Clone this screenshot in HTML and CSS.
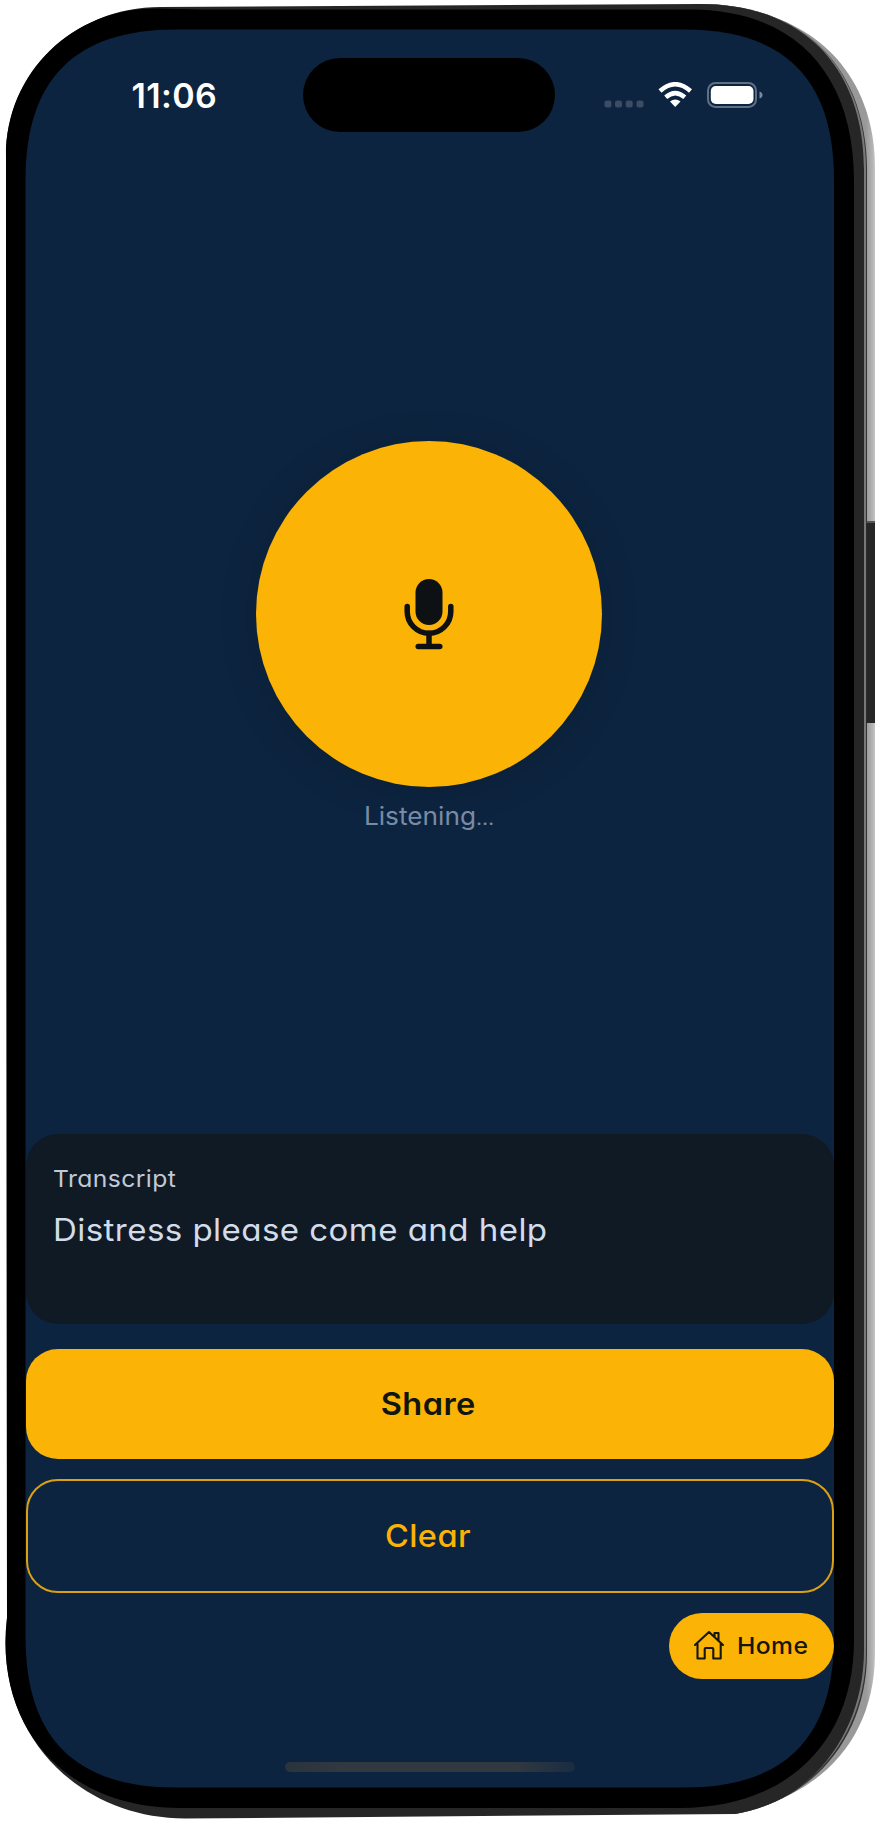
FILE: index.html
```html
<!DOCTYPE html>
<html lang="en">
<head>
<meta charset="utf-8">
<title>Listening</title>
<link rel="stylesheet" href="styles.css">
</head>
<body>
<div class="device">
  <svg class="frame" viewBox="0 0 875 1821" aria-hidden="true">
    <defs>
      <linearGradient id="silver" gradientUnits="userSpaceOnUse" x1="866" y1="0" x2="875" y2="0">
        <stop offset="0" stop-color="#999"/><stop offset=".75" stop-color="#b5b5b5"/><stop offset="1" stop-color="#c8c8c8"/>
      </linearGradient>
    </defs>
    <path fill="url(#silver)" d="M700 5C808 5 875 70 875 168V1655C874 1740 820 1798 730 1814H690Z"/>
    <path fill="#333" d="M700 4C808 5 867 71 867 172V1653C867 1735 815 1800 735 1814H690Z"/>
    <path fill="#777" d="M700 4C807 4 866 70 866 171V1652C866 1732 814 1800 734 1814H690Z"/>
    <path fill="#262626" d="M6 156C6 72 75 7 160 7L700 4C806 4 864 70 864 170V1650C864 1730 815 1801 735 1814L185 1818.500C85 1818 6 1745 5.500 1643Q5.500 1630 7 1618Z"/>
    <path fill="#000" d="M6 156C6 71 74 8.500 155 8.500L200 9.500H690C797 9.500 854 76 854 180V1640C854 1744 785 1808 680 1808H180C75 1808 5.500 1740 5.500 1643Q5.500 1630 7 1618Z"/>
    <path fill="#0d2440" d="M25.500 180C25.500 79 75 29.500 176 29.500H684C785 29.500 834 79 834 180V1637C834 1738 785 1787.500 684 1787.500H176C75 1787.500 25.500 1738 25.500 1637Z"/>
    <path fill="#262626" d="M866.500 523H875V723H866.500Z"/>
    <path fill="#555" d="M866.500 521H875V523H866.500Z"/>
  </svg>
  <main class="screen">
    <header class="status">
      <span class="clock">11:06</span>
      <span class="island"></span>
      <svg class="indicators" width="160" height="28" viewBox="0 0 160 28" aria-hidden="true">
        <g fill="#3c4c63"><rect x=".5" y="18.500" width="7" height="7" rx="2.300"/><rect x="11" y="18.500" width="7" height="7" rx="2.300"/><rect x="21.700" y="18.500" width="7" height="7" rx="2.300"/><rect x="32.500" y="18.500" width="7" height="7" rx="2.300"/></g>
        <g fill="none" stroke="#fff" stroke-width="4.500"><path d="M56 9Q71.200-4.500 86.500 9"/><path d="M61.700 15.300Q71.200 7 80.800 15.300"/></g>
        <path fill="#fff" d="M66 19.500Q71.200 15.500 76.500 19.500L71.200 25Z"/>
        <rect x="104" y="1" width="48" height="24" rx="7.500" fill="none" stroke="#5f6f84" stroke-width="2"/>
        <rect x="106.800" y="4" width="42.700" height="18" rx="5" fill="#fff"/>
        <path fill="#7b899b" d="M155.500 9.500Q158.500 10.500 158.500 13T155.500 16.500Z"/>
      </svg>
    </header>
    <section class="recorder">
      <button class="mic" aria-label="Stop listening">
        <svg width="52" height="74" viewBox="0 0 52 74" aria-hidden="true">
          <rect x="12.500" y="2" width="27" height="46" rx="13.500" fill="#0d1114"/>
          <path d="M4.200 29.500V34.500A21.800 21.800 0 0 0 47.800 34.500V29.500M26 56V69.500M15.200 69.500H36.800" fill="none" stroke="#0d1114" stroke-width="5.500" stroke-linecap="round"/>
        </svg>
      </button>
      <p class="hint"><span>Listening<span class="dots">…</span></span></p>
    </section>
    <section class="transcript">
      <h2 class="label"><span>Transcript</span></h2>
      <p class="message"><span>Distress please come and help</span></p>
    </section>
    <button class="btn share"><span>Share</span></button>
    <button class="btn clear"><span>Clear</span></button>
    <button class="home">
      <svg width="32" height="32" viewBox="0 0 32 32" fill="none" stroke="#15170f" stroke-width="2.100" stroke-linejoin="round" stroke-linecap="round" aria-hidden="true">
        <path d="M2 15L16 2L30 15M4.500 13.500V28.500H11.700V19Q11.700 18 12.700 18H19.300Q20.300 18 20.300 19V28.500H27.700V13.500M21.500 6.500V3H25.500V10.500"/>
      </svg>
      <span>Home</span>
    </button>
    <div class="indicator-bar"></div>
  </main>
</div>
</body>
</html>
```
FILE: styles.css
```css
* { box-sizing: border-box; }
body { margin: 0; background: #fff; }
button { border: 0; padding: 0; font: inherit; }
h2, p { margin: 0; }
.device {
  position: relative;
  width: 875px;
  height: 1821px;
  padding: 29.5px 41px 33.5px 25.5px;
  font-family: Inter, "Noto Sans", sans-serif;
  font-feature-settings: "cv11" 1;
}
.frame { position: absolute; inset: 0; width: 875px; height: 1821px; }
.screen {
  position: relative;
  display: flex;
  flex-direction: column;
  width: 808.5px;
  height: 1758px;
}
.status { display: flex; height: 102px; padding-top: 28px; }
.clock {
  width: 277.5px;
  padding-left: 106px;
  color: #fff;
  font-size: 34px;
  font-weight: 600;
  line-height: 75px;
  letter-spacing: .4px;
}
.island { width: 252px; height: 74px; border-radius: 37px; background: #000; }
.indicators { margin: 24.5px 0 0 49px; }
.recorder {
  display: flex;
  flex-direction: column;
  align-items: center;
  height: 1002px;
  padding-top: 309px;
}
.mic {
  display: grid;
  place-items: center;
  width: 346px;
  height: 346px;
  flex: none;
  margin-right: 1px;
  border-radius: 50%;
  background: #fbb305;
  box-shadow: 0 4px 32px rgba(8, 26, 36, .35);
}
.hint { margin: 12.5px 2px 0 0; color: #788ba5; font-size: 25px; line-height: 34px; font-weight: 400; }
.transcript { height: 190.5px; padding: 29px 27.5px; border-radius: 32px; background: #101a25; }
.label { color: #c0cad7; font-size: 23.5px; line-height: 32px; font-weight: 400; }
.message { margin-top: 14px; color: #d3dcea; font-size: 31px; line-height: 42px; font-weight: 400; white-space: nowrap; }

/* Slightly widened letterforms */
.hint > span, .label span, .message span, .btn span, .home span {
  display: inline-block;
  transform: scaleX(1.05);
}
.label span, .message span, .home span { transform-origin: 0 50%; }
.hint .dots { font-size: 20px; }
.label span { letter-spacing: .4px; }
.message span { letter-spacing: .4px; transform: scaleX(1.067); }
.btn span { letter-spacing: .4px; }
.home span { letter-spacing: .4px; }

.btn { width: 100%; flex: none; padding-right: 3px; border-radius: 32px; font-size: 31px; text-align: center; }
.share { height: 110px; margin-top: 24.5px; background: #fbb305; color: #11150f; font-weight: 600; }
.clear { height: 114px; margin-top: 20px; border: 2px solid #dba113; background: transparent; color: #fbb305; font-weight: 500; }
.home {
  display: flex;
  align-items: center;
  align-self: flex-end;
  gap: 12px;
  width: 165px;
  height: 66px;
  margin-top: 20px;
  padding-left: 24px;
  border-radius: 33px;
  background: #fbb305;
  color: #15170f;
  font-size: 23.5px;
  font-weight: 500;
}
.indicator-bar {
  align-self: center;
  width: 290px;
  height: 10px;
  margin-top: 83px;
  border-radius: 5px;
  background: linear-gradient(90deg, #2a343d, #303840 20%, #303840 80%, #1a2c43);
}
```
